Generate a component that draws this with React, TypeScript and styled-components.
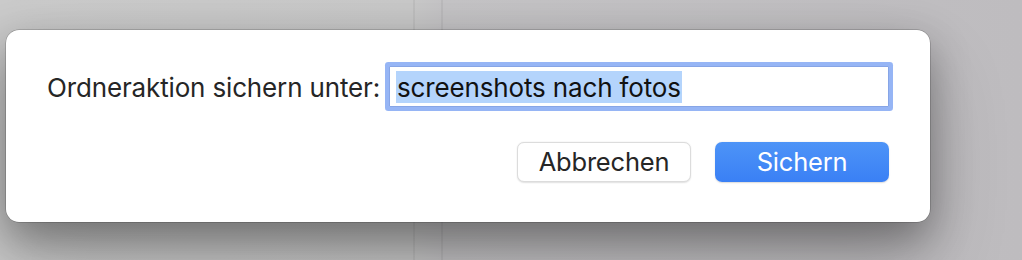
import React from "react";
import styled, { createGlobalStyle } from "styled-components";

const Global = createGlobalStyle`
  html, body { margin: 0; padding: 0; }
  body {
    width: 1022px;
    height: 260px;
    overflow: hidden;
    font-family: Inter, "Noto Sans", sans-serif;
    background:
      linear-gradient(90deg, transparent 413px, rgba(0,0,0,0.05) 413px, rgba(0,0,0,0.05) 415px, transparent 415px, transparent 441px, rgba(0,0,0,0.05) 441px, rgba(0,0,0,0.05) 443px, transparent 443px),
      linear-gradient(90deg, #cacaca 0px, #c8c8c8 413px, #c4c3c5 443px, #bebcbf 1022px);
  }
`;

const Backdrop = styled.div`
  padding: 30px 0 0 6px;
  height: 260px;
  box-sizing: border-box;
`;

const Dialog = styled.div`
  width: 924px;
  height: 192px;
  box-sizing: border-box;
  background: #ffffff;
  border-radius: 13px;
  box-shadow: 0 0 0 0.5px rgba(0,0,0,0.3), 0 16px 40px rgba(0,0,0,0.32), 0 40px 80px rgba(0,0,0,0.2);
  padding: 36px 41px 0 41px;
  display: flex;
  flex-direction: column;
`;

const Row = styled.div`
  display: flex;
  align-items: center;
  justify-content: space-between;
`;

const Label = styled.span`
  font-size: 26px;
  color: #262626;
  white-space: nowrap;
  letter-spacing: -0.15px;
  padding-top: 1px;
`;

const Field = styled.div`
  width: 500px;
  height: 41px;
  box-sizing: border-box;
  background: #fff;
  border: 1px solid #87a5e6;
  box-shadow: 0 0 0 4px #96b5f5;
  border-radius: 1px;
  display: flex;
  align-items: center;
  padding-left: 6px;
`;

const Selected = styled.span`
  background: #b4d4fc;
  font-size: 26px;
  color: #111;
  line-height: 32px;
  height: 32px;
  padding: 1px 1px 0 1px;
  box-sizing: border-box;
  letter-spacing: -0.15px;
`;

const Buttons = styled.div`
  display: flex;
  justify-content: flex-end;
  gap: 24px;
  margin-top: 35px;
`;

const Button = styled.button<{ $primary?: boolean }>`
  width: 174px;
  height: 40px;
  border-radius: 7px;
  font-family: Inter, "Noto Sans", sans-serif;
  font-size: 25.5px;
  letter-spacing: -0.2px;
  cursor: default;
  padding: 0 0 1px 0;
  border: ${p => (p.$primary ? "none" : "1px solid #dcdcdc")};
  color: ${p => (p.$primary ? "#ffffff" : "#262626")};
  background: ${p => (p.$primary ? "linear-gradient(180deg, #4d94f7 0%, #3a80f5 100%)" : "#ffffff")};
  box-shadow: ${p => (p.$primary ? "0 0.5px 1.5px rgba(0,0,0,0.15)" : "0 0.5px 1.5px rgba(0,0,0,0.12)")};
`;

export default function App() {
  return (
    <>
      <Global />
      <Backdrop>
        <Dialog>
          <Row>
            <Label>Ordneraktion sichern unter:</Label>
            <Field>
              <Selected>screenshots nach fotos</Selected>
            </Field>
          </Row>
          <Buttons>
            <Button>Abbrechen</Button>
            <Button $primary>Sichern</Button>
          </Buttons>
        </Dialog>
      </Backdrop>
    </>
  );
}
